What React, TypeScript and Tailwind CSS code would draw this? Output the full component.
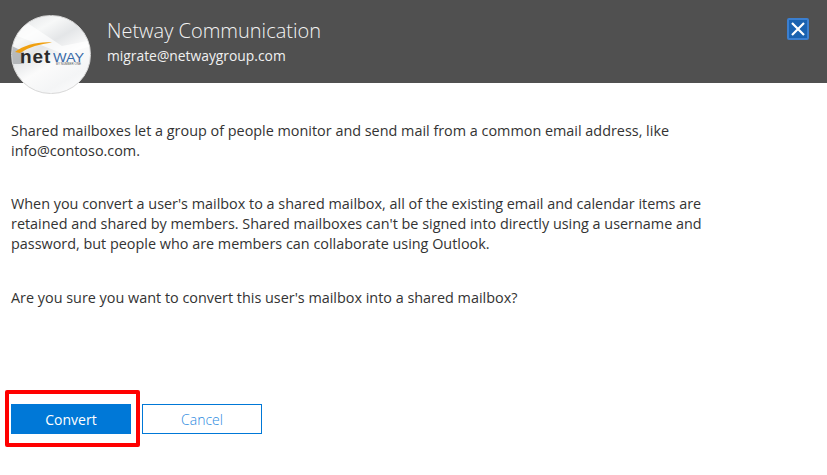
const font = "font-['Open_Sans',sans-serif]";

function Avatar() {
  return (
    <div className="absolute left-[11px] top-[15px] w-[80px] h-[79px] rounded-full border border-[#d8d8d8] overflow-hidden bg-[linear-gradient(150deg,#dfe1e3_0%,#f7f8f8_24%,#e4e6e8_40%,#fbfbfb_58%,#f4f5f6_78%,#ffffff_100%)]">
      <svg className="absolute left-0 top-0" width="80" height="79" viewBox="0 0 80 79">
        <path d="M0 18 L52 38 L80 30 L80 24 L50 30 L14 6 Z" fill="#fff" opacity="0.7" />
        <path d="M0 30 L12 36 L12 48 L0 48 Z" fill="#8d9094" opacity="0.55" />
        <path d="M3 36 C12 29 26 25.5 40 26.5 C28 28 17 31 8 37 Z" fill="#f0a010" />
      </svg>
      <div className="absolute left-[8px] top-[29px] text-[19px] leading-[24px] font-bold text-[#2a2a2a] tracking-[0.9px] whitespace-nowrap font-['Liberation_Sans',sans-serif]">net</div>
      <div className="absolute left-[41px] top-[34px] text-[12px] leading-[16px] text-[#3a6ba8] origin-left scale-x-[1.2] whitespace-nowrap font-['Liberation_Sans',sans-serif]">WAY</div>
      <div className="absolute left-[44px] top-[47px] text-[3px] leading-none text-[#555] whitespace-nowrap font-['Liberation_Sans',sans-serif]">BY NUMBER ONE</div>
    </div>
  );
}

export default function App() {
  return (
    <div className={`relative w-[827px] h-[475px] bg-white overflow-hidden ${font}`}>
      <header className="h-[83px] bg-[#505050] flex justify-between pl-[107px] pr-[18px]">
        <div className="pt-[17px]">
          <div className="text-[20px] leading-[28px] font-light text-[#f4f4f4]">Netway Communication</div>
          <div className="text-[13.85px] leading-[20px] mt-[1px] text-[#f0f0f0]">migrate@netwaygroup.com</div>
        </div>
        <button className="mt-[18px] w-[22px] h-[22px] bg-[#1a62b0] border-2 border-[#3b7fd0] rounded-[2px] flex items-center justify-center">
          <svg width="16" height="16" viewBox="0 0 16 16">
            <path d="M2 2 L14 14 M14 2 L2 14" stroke="#fff" strokeWidth="2.2" />
          </svg>
        </button>
      </header>
      <Avatar />

      <main className="pl-[11px] pr-[90px] pt-[38px] text-[14.4px] leading-[20px] text-[#333]">
        <p>Shared mailboxes let a group of people monitor and send mail from a common email address, like info@contoso.com.</p>
        <p className="mt-[33px]">When you convert a user's mailbox to a shared mailbox, all of the existing email and calendar items are retained and shared by members. Shared mailboxes can't be signed into directly using a username and password, but people who are members can collaborate using Outlook.</p>
        <p className="mt-[34px]">Are you sure you want to convert this user's mailbox into a shared mailbox?</p>
      </main>

      <footer className="absolute left-[11px] top-[404px] flex gap-[11px]">
        <button className="w-[120px] h-[30px] bg-[#0078d7] text-white text-[14px]">Convert</button>
        <button className="w-[120px] h-[30px] border border-[#0078d7] bg-white text-[#2a8ae0] text-[14px] font-light">Cancel</button>
      </footer>
      <div className="absolute left-[5px] top-[390px] w-[135px] h-[57px] border-[4px] border-[#ff0000] rounded-[2px]" />
    </div>
  );
}
